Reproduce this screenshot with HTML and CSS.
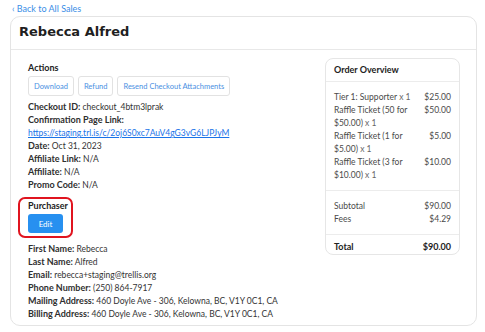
FILE: index.html
```html
<!DOCTYPE html>
<html>
  <head>
    <title>Rebecca Alfred - Sale</title>
    <link rel="stylesheet" href="styles.css">
  </head>
  <body>
    <a class="back-link" href="#">&#8249; Back to All Sales</a>

    <div class="card">
      <div class="card-header">
        <h1>Rebecca Alfred</h1>
      </div>

      <div class="card-body">
        <div class="details">
          <h3>Actions</h3>
          <div class="actions">
            <button type="button" class="btn-outline">Download</button>
            <button type="button" class="btn-outline">Refund</button>
            <button type="button" class="btn-outline">Resend Checkout Attachments</button>
          </div>

          <p><b>Checkout ID:</b> checkout_4btm3lprak</p>
          <p><b>Confirmation Page Link:</b></p>
          <p><a href="#">https://staging.trl.is/c/2oj6S0xc7AuV4gG3vG6LJPJyM</a></p>
          <p><b>Date:</b> Oct 31, 2023</p>
          <p><b>Affiliate Link:</b> N/A</p>
          <p><b>Affiliate:</b> N/A</p>
          <p><b>Promo Code:</b> N/A</p>

          <div class="purchaser">
            <h3>Purchaser</h3>
            <button type="button" class="btn-primary">Edit</button>
          </div>

          <p><b>First Name:</b> Rebecca</p>
          <p><b>Last Name:</b> Alfred</p>
          <p><b>Email:</b> rebecca+staging@trellis.org</p>
          <p><b>Phone Number:</b> (250) 864-7917</p>
          <p><b>Mailing Address:</b> 460 Doyle Ave - 306, Kelowna, BC, V1Y 0C1, CA</p>
          <p><b>Billing Address:</b> 460 Doyle Ave - 306, Kelowna, BC, V1Y 0C1, CA</p>
        </div>

        <div class="overview">
          <div class="overview-title">Order Overview</div>
          <div class="overview-section">
            <div class="row"><span class="item">Tier 1: Supporter <span class="qty">x 1</span></span><span>$25.00</span></div>
            <div class="row"><span class="item">Raffle Ticket (50 for $50.00) <span class="qty">x 1</span></span><span>$50.00</span></div>
            <div class="row"><span class="item">Raffle Ticket (1 for $5.00) <span class="qty">x 1</span></span><span>$5.00</span></div>
            <div class="row"><span class="item">Raffle Ticket (3 for $10.00) <span class="qty">x 1</span></span><span>$10.00</span></div>
          </div>
          <div class="overview-section">
            <div class="row"><span class="item">Subtotal</span><span>$90.00</span></div>
            <div class="row"><span class="item">Fees</span><span>$4.29</span></div>
          </div>
          <div class="overview-total">
            <span>Total</span><span>$90.00</span>
          </div>
        </div>
      </div>
    </div>
  </body>
</html>
```

FILE: styles.css
```css
/* Global styles */
body {
  font-family: Lato, "Open Sans", sans-serif;
  font-size: 8.5px;
  color: #333;
  margin: 0;
  padding: 3px 10px 0 10px;
  background: #fff;
}

b {
  font-size: 9px;
  line-height: 1;
  font-weight: 700;
  color: #2f2f2f;
}

a {
  color: #1a73e8;
}

/* Back link */
.back-link {
  display: inline-block;
  color: #3a8ee6;
  text-decoration: none;
  font-size: 9px;
  line-height: 11px;
  margin-left: 2px;
}

/* Card */
.card {
  margin-top: 2px;
  width: 467px;
  height: 310px;
  box-sizing: border-box;
  border: 1px solid #e4e4e4;
  border-radius: 10px;
}

.card-header {
  border-bottom: 1px solid #e8e8e8;
  padding: 5px 8px 7px 8px;
}

.card-header h1 {
  margin: 0;
  font-family: "DejaVu Sans", sans-serif;
  font-size: 13px;
  line-height: 20px;
  color: #1f1f1f;
}

.card-body {
  display: flex;
  justify-content: space-between;
  padding: 11px 16px 0 17px;
}

/* Left column */
.details h3 {
  margin: 0;
  font-size: 9px;
  line-height: 14px;
  color: #222;
}

.details p {
  margin: 0;
  line-height: 13px;
  height: 13px;
  white-space: nowrap;
}

.actions {
  display: flex;
  gap: 4px;
  margin: 1px 0 5px 0;
}

.btn-outline {
  font-family: Lato, sans-serif;
  font-size: 7.5px;
  color: #4a90e2;
  background: #fff;
  border: 1px solid #e2e2e2;
  border-radius: 3px;
  padding: 0 5px;
  height: 20px;
}

.purchaser {
  width: 43px;
  margin: 5px 0 5px -10px;
  padding: 0 0 3px 8px;
  border: 2px solid #e0141f;
  border-radius: 7px;
}

.details .purchaser h3 {
  line-height: 13px;
}

.btn-primary {
  font-family: Lato, sans-serif;
  font-size: 8px;
  color: #fff;
  background: #2790f0;
  border: none;
  border-radius: 3px;
  width: 35px;
  height: 19px;
  margin-top: 2px;
  display: block;
}

/* Order overview */
.overview {
  width: 135px;
  height: 197px;
  box-sizing: border-box;
  border: 1px solid #e6e6e6;
  border-radius: 8px;
  margin-top: -3px;
}

.overview-title {
  font-size: 9px;
  font-weight: 700;
  color: #222;
  padding: 4px 8px 4px 8px;
  line-height: 14px;
  border-bottom: 1px solid #ececec;
}

.overview-section {
  padding: 9px 8px 8px 8px;
  border-bottom: 1px solid #ececec;
}

.row {
  display: flex;
  justify-content: space-between;
  line-height: 13px;
  color: #4a4a4a;
}

.row .item {
  width: 84px;
}

.row .qty {
  color: #666;
}

.overview-total {
  display: flex;
  justify-content: space-between;
  font-size: 9px;
  font-weight: 700;
  color: #222;
  padding: 5px 8px;
  line-height: 13px;
}
```
